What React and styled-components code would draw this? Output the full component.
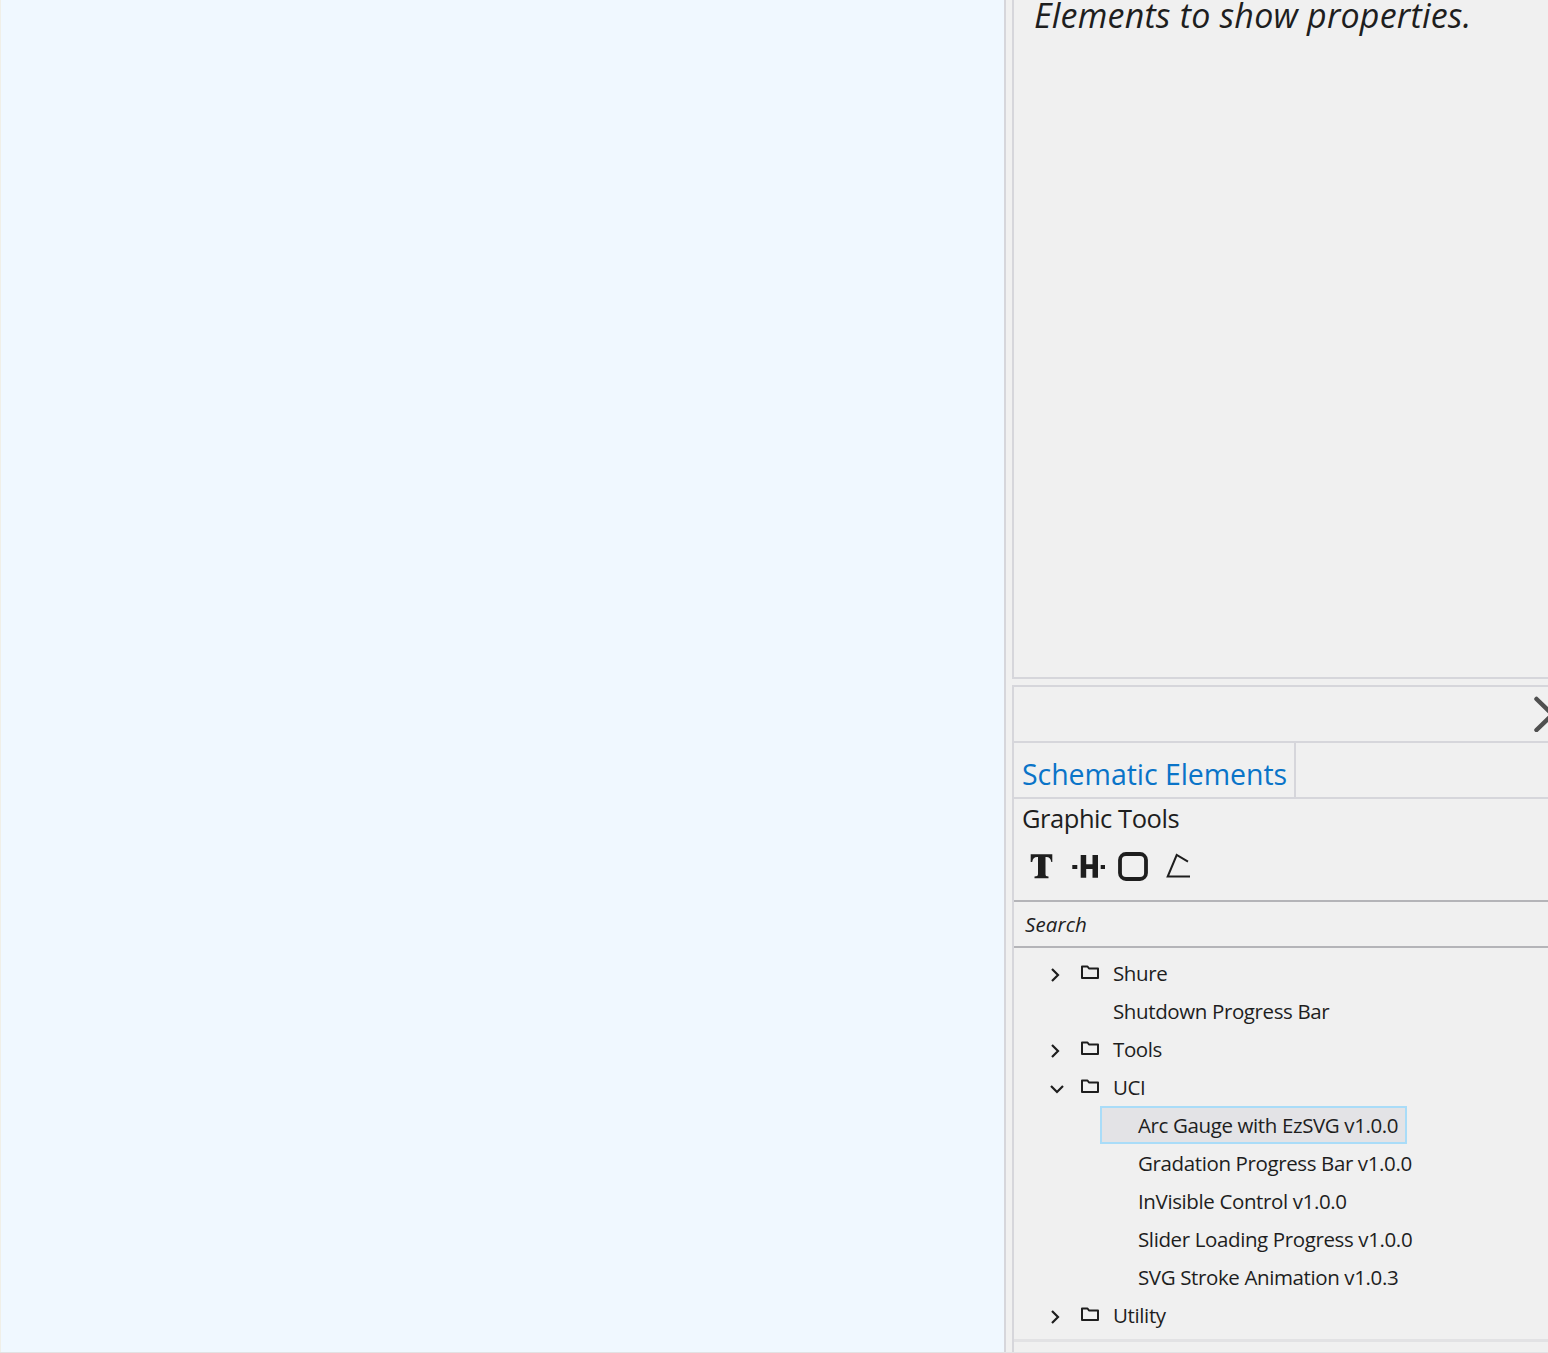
import React from 'react';
import styled, { createGlobalStyle } from 'styled-components';

const GlobalStyle = createGlobalStyle`
  html, body {
    margin: 0;
    padding: 0;
    height: 100%;
    overflow: hidden;
    background: #f0f0f0;
  }
  #root {
    height: 100%;
  }
`;

const Page = styled.div`
  display: flex;
  width: 1548px;
  height: 1353px;
  overflow: hidden;
  font-family: 'Open Sans', 'Noto Sans', sans-serif;
  color: #1e1e1e;
  box-sizing: border-box;
  border-bottom: 1px solid #e2e2e4;
`;

const Canvas = styled.div`
  width: 1004px;
  flex: none;
  background: #f0f8ff;
  border-left: 1px solid #f0efe8;
  box-sizing: border-box;
`;

const Splitter = styled.div`
  width: 8px;
  flex: none;
  background: #f0f0f0;
  border-left: 2px solid #d6d6db;
  box-sizing: border-box;
`;

const Side = styled.div`
  flex: 1;
  min-width: 0;
  display: flex;
  flex-direction: column;
  gap: 6px;
`;

const Properties = styled.div`
  height: 679px;
  flex: none;
  box-sizing: border-box;
  border-left: 2px solid #d6d6db;
  border-bottom: 2px solid #d6d6db;
  overflow: hidden;
`;

const Hint = styled.p`
  margin: -7px 0 0 20px;
  font-size: 34px;
  font-style: italic;
  line-height: 44px;
  white-space: nowrap;
  letter-spacing: 0.2px;
`;

const Library = styled.div`
  flex: 1;
  min-height: 0;
  display: flex;
  flex-direction: column;
  box-sizing: border-box;
  border-left: 2px solid #d6d6db;
  border-top: 2px solid #d6d6db;
`;

const Header = styled.div`
  height: 54px;
  flex: none;
  display: flex;
  align-items: center;
  justify-content: flex-end;
  border-bottom: 2px solid #d6d6db;
  overflow: hidden;
`;

const CloseIcon = styled.svg`
  width: 14px;
  height: 36px;
  flex: none;
  display: block;
`;

const TabRow = styled.div`
  height: 54px;
  flex: none;
  display: flex;
  border-bottom: 2px solid #d6d6db;
`;

const Tab = styled.div`
  display: flex;
  align-items: center;
  width: 272px;
  padding: 8px 0 0 8px;
  font-size: 28.5px;
  letter-spacing: -0.05px;
  color: #0a74c8;
  border-right: 2px solid #d6d6db;
  white-space: nowrap;
`;

const Tools = styled.div`
  height: 103px;
  flex: none;
  box-sizing: border-box;
  padding: 0 8px;
  border-bottom: 2px solid #b4b4b8;
`;

const ToolsTitle = styled.div`
  font-size: 25.5px;
  line-height: 38px;
  letter-spacing: -0.45px;
`;

const ToolIcons = styled.div`
  display: flex;
  align-items: center;
  gap: 11px;
  margin: 12px 0 0 4px;
`;

const ToolIcon = styled.svg`
  width: 34px;
  height: 34px;
  flex: none;
  display: block;
`;

const Search = styled.div`
  height: 46px;
  flex: none;
  box-sizing: border-box;
  display: flex;
  align-items: center;
  padding-left: 11px;
  font-size: 20.5px;
  font-style: italic;
  letter-spacing: 0.1px;
  border-bottom: 2px solid #b4b4b8;
`;

const Tree = styled.div`
  height: 394px;
  flex: none;
  box-sizing: border-box;
  padding-top: 6px;
  border-bottom: 3px solid #e2e2e4;
`;

const Row = styled.div`
  height: 38px;
  display: flex;
  align-items: center;
  box-sizing: border-box;
  padding-left: ${p => (p.$child ? '38px' : '0')};
  margin-left: ${p => (p.$child ? '86px' : '0')};
  width: ${p => (p.$child ? '307px' : 'auto')};
  font-size: 20.5px;
  letter-spacing: -0.38px;
  white-space: nowrap;
  ${p =>
    p.$selected &&
    `
    background: #e3e3e6;
    outline: 2px solid #a9dcf8;
    outline-offset: -2px;
  `}
`;

const Chevron = styled.svg`
  width: 14px;
  height: 18px;
  margin: 4px 17px 0 ${p => (p.$open ? '36px' : '35px')};
  margin-right: ${p => (p.$open ? '16px' : '17px')};
  flex: none;
  display: block;
`;

const Spacer = styled.span`
  width: 99px;
  flex: none;
`;

const Folder = styled.svg`
  width: 20px;
  height: 18px;
  margin: -2px 13px 0 0;
  flex: none;
  display: block;
`;

const FolderIcon = () => (
  <Folder viewBox="0 0 20 18">
    <path
      d="M2 15V3.500h5.500L9 5.500h9V15z"
      fill="none"
      stroke="#1e1e1e"
      strokeWidth="2"
      strokeLinejoin="round"
    />
  </Folder>
);

const Arrow = ({ open }) => (
  <Chevron $open={open} viewBox="0 0 14 18">
    <path
      d={open ? 'M1 6l6 6 6-6' : 'M3 3l6 6-6 6'}
      fill="none"
      stroke="#1e1e1e"
      strokeWidth="2.2"
    />
  </Chevron>
);

const Node = ({ label, open }) => (
  <Row>
    <Arrow open={open} />
    <FolderIcon />
    {label}
  </Row>
);

const children = [
  'Arc Gauge with EzSVG v1.0.0',
  'Gradation Progress Bar v1.0.0',
  'InVisible Control v1.0.0',
  'Slider Loading Progress v1.0.0',
  'SVG Stroke Animation v1.0.3',
];

export default function App() {
  return (
    <>
      <GlobalStyle />
      <Page>
        <Canvas />
        <Splitter />
        <Side>
          <Properties>
            <Hint>Elements to show properties.</Hint>
          </Properties>
          <Library>
            <Header>
              <CloseIcon viewBox="0 0 14 36">
                <path
                  d="M2.500 3l16 15.500M2.500 34l16-15.500"
                  fill="none"
                  stroke="#505050"
                  strokeWidth="4.500"
                  strokeLinecap="round"
                />
              </CloseIcon>
            </Header>
            <TabRow>
              <Tab>Schematic Elements</Tab>
            </TabRow>
            <Tools>
              <ToolsTitle>Graphic Tools</ToolsTitle>
              <ToolIcons>
                <ToolIcon viewBox="0 0 34 34">
                  <path
                    d="M4.700 5.300H26.300V13h-1c-.6-3.500-2-5-5-5h-.8V25c0 1.800.7 2.400 3 2.500v1.800H8.500v-1.800c2.300-.1 3.500-.7 3.500-2.500V8h-.8c-3 0-4.400 1.500-5 5h-1.500z"
                    fill="#1e1e1e"
                  />
                </ToolIcon>
                <ToolIcon viewBox="0 0 34 34">
                  <path d="M1.300 16h5v4h-5zM29.700 16H34v4h-4.300z" fill="#1e1e1e" />
                  <path
                    d="M9.700 6h5.500v9.300h6.300V6H27v22.700h-5.500V20h-6.300v8.700H9.700z"
                    fill="#1e1e1e"
                  />
                </ToolIcon>
                <ToolIcon viewBox="0 0 34 34">
                  <rect
                    x="4"
                    y="5"
                    width="26"
                    height="25"
                    rx="6"
                    fill="none"
                    stroke="#1e1e1e"
                    strokeWidth="3.800"
                  />
                </ToolIcon>
                <ToolIcon viewBox="0 0 34 34">
                  <path
                    d="M27 12.700L15.700 6 6.700 27.500H29"
                    fill="none"
                    stroke="#1e1e1e"
                    strokeWidth="2"
                  />
                </ToolIcon>
              </ToolIcons>
            </Tools>
            <Search>Search</Search>
            <Tree>
              <Node label="Shure" />
              <Row>
                <Spacer />
                Shutdown Progress Bar
              </Row>
              <Node label="Tools" />
              <Node label="UCI" open />
              {children.map((label, i) => (
                <Row key={label} $child $selected={i === 0}>
                  {label}
                </Row>
              ))}
              <Node label="Utility" />
            </Tree>
          </Library>
        </Side>
      </Page>
    </>
  );
}
